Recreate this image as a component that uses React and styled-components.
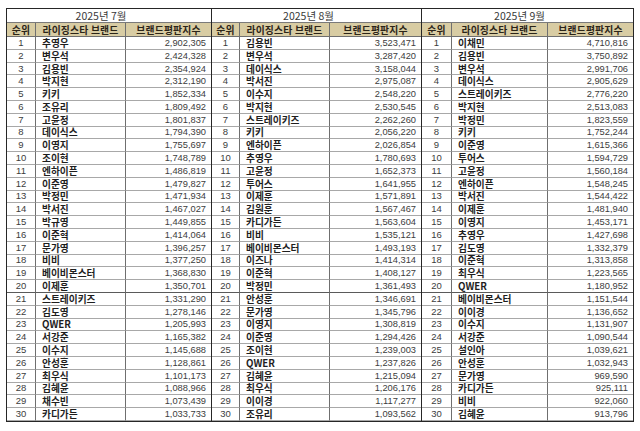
import React from "react";
import styled, { createGlobalStyle } from "styled-components";

const GlobalStyle = createGlobalStyle`
    html, body {
        margin: 0;
        padding: 0;
        background: #ffffff;
    }
    body {
        font-family: "Liberation Sans", "Noto Sans CJK KR", sans-serif;
        -webkit-font-smoothing: antialiased;
    }
`;

const toRows = (text) =>
    text
        .trim()
        .split("\n")
        .map((line) => {
            const [rank, brand, score] = line.trim().split(" ");
            return { rank, brand, score };
        });

const MONTHS = [
    {
        title: "2025년 7월",
        cols: "29px 90px 1fr",
        width: 206,
        rows: toRows(`
            1 추영우 2,902,305
            2 변우석 2,424,328
            3 김용빈 2,354,924
            4 박지현 2,312,190
            5 키키 1,852,334
            6 조유리 1,809,492
            7 고윤정 1,801,837
            8 데이식스 1,794,390
            9 이영지 1,755,697
            10 조이현 1,748,789
            11 엔하이픈 1,486,819
            12 이준영 1,479,827
            13 박정민 1,471,934
            14 박서진 1,467,027
            15 박규영 1,449,855
            16 이준혁 1,414,064
            17 문가영 1,396,257
            18 비비 1,377,250
            19 베이비몬스터 1,368,830
            20 이제훈 1,350,701
            21 스트레이키즈 1,331,290
            22 김도영 1,278,146
            23 QWER 1,205,993
            24 서강준 1,165,382
            25 이수지 1,145,688
            26 안성훈 1,128,861
            27 최우식 1,101,173
            28 김혜윤 1,088,966
            29 채수빈 1,073,439
            30 카디가든 1,033,733
        `),
    },
    {
        title: "2025년 8월",
        cols: "28px 90px 1fr",
        width: 210,
        rows: toRows(`
            1 김용빈 3,523,471
            2 변우석 3,287,420
            3 데이식스 3,158,044
            4 박서진 2,975,087
            5 이수지 2,548,220
            6 박지현 2,530,545
            7 스트레이키즈 2,262,260
            8 키키 2,056,220
            9 엔하이픈 2,026,854
            10 추영우 1,780,693
            11 고윤정 1,652,373
            12 투어스 1,641,955
            13 이제훈 1,571,891
            14 김원훈 1,567,467
            15 카디가든 1,563,604
            16 비비 1,535,121
            17 베이비몬스터 1,493,193
            18 이즈나 1,414,314
            19 이준혁 1,408,127
            20 박정민 1,361,493
            21 안성훈 1,346,691
            22 문가영 1,345,796
            23 이영지 1,308,819
            24 이준영 1,294,426
            25 조이현 1,239,003
            26 QWER 1,237,826
            27 김혜윤 1,215,094
            28 최우식 1,206,176
            29 이이경 1,117,277
            30 조유리 1,093,562
        `),
    },
    {
        title: "2025년 9월",
        cols: "30px 96px 1fr",
        width: 212,
        rows: toRows(`
            1 이채민 4,710,816
            2 김용빈 3,750,892
            3 변우석 2,991,706
            4 데이식스 2,905,629
            5 스트레이키즈 2,776,220
            6 박지현 2,513,083
            7 박정민 1,823,559
            8 키키 1,752,244
            9 이준영 1,615,366
            10 투어스 1,594,729
            11 고윤정 1,560,184
            12 엔하이픈 1,548,245
            13 박서진 1,544,422
            14 이제훈 1,481,940
            15 이영지 1,453,171
            16 추영우 1,427,698
            17 김도영 1,332,379
            18 이준혁 1,313,858
            19 최우식 1,223,565
            20 QWER 1,180,952
            21 베이비몬스터 1,151,544
            22 이이경 1,136,652
            23 이수지 1,131,907
            24 서강준 1,090,544
            25 설인아 1,039,621
            26 안성훈 1,032,943
            27 문가영 969,590
            28 카디가든 925,111
            29 비비 922,060
            30 김혜윤 913,796
        `),
    },
];

const App = () => {
    return (
        <>
            <GlobalStyle />
            <Page>
                <Board>
                    {MONTHS.map((month, i) => (
                        <Table
                            key={month.title}
                            $cols={month.cols}
                            $width={month.width}
                            $first={i === 0}
                        >
                            <TitleCell>{month.title}</TitleCell>
                            <HeadCell $divider>순위</HeadCell>
                            <HeadCell $divider>라이징스타 브랜드</HeadCell>
                            <HeadCell>브랜드평판지수</HeadCell>
                            {month.rows.map((row) => {
                                const strong = row.rank === "20";
                                return (
                                    <React.Fragment key={row.rank}>
                                        <RankCell $strong={strong}>
                                            {row.rank}
                                        </RankCell>
                                        <BrandCell $strong={strong}>
                                            {row.brand}
                                        </BrandCell>
                                        <ScoreCell $strong={strong}>
                                            {row.score}
                                        </ScoreCell>
                                    </React.Fragment>
                                );
                            })}
                        </Table>
                    ))}
                </Board>
            </Page>
        </>
    );
};

const Page = styled.div`
    width: 640px;
    height: 431px;
    padding: 8px 0 0 6px;
    box-sizing: border-box;
    background: #ffffff;
`;

const Board = styled.div`
    display: flex;
    align-items: flex-start;
`;

const Table = styled.div`
    display: grid;
    grid-template-columns: ${(p) => p.$cols};
    grid-template-rows: 14px 14px repeat(30, 12.8px);
    width: ${(p) => p.$width}px;
    box-sizing: border-box;
    border: 1px solid #262626;
    border-left: ${(p) => (p.$first ? "1px solid #262626" : "none")};
`;

const Cell = styled.div`
    display: flex;
    align-items: center;
    box-sizing: border-box;
    min-height: 0;
    white-space: nowrap;
    line-height: 12px;
    border-bottom: 1px solid
        ${(p) => (p.$strong ? "#5a5a5a" : "#a8a8a8")};
`;

const TitleCell = styled(Cell)`
    grid-column: 1 / -1;
    justify-content: center;
    padding-right: 16px;
    font-family: "Noto Sans CJK KR", sans-serif;
    font-size: 10.5px;
    color: #3a3a3a;
    border-bottom: 1px solid #7a7a7a;
`;

const HeadCell = styled(Cell)`
    justify-content: center;
    background: #d8cca3;
    font-family: "Noto Sans CJK KR", sans-serif;
    font-weight: 700;
    font-size: 9.8px;
    letter-spacing: 0.2px;
    color: #2b2418;
    border-bottom: 1px solid #6f6f6f;
    border-right: ${(p) => (p.$divider ? "1px solid #6f6f6f" : "none")};
`;

const RankCell = styled(Cell)`
    justify-content: center;
    font-size: 9.5px;
    color: #3c3c3c;
    border-right: 1px solid #6f6f6f;
`;

const BrandCell = styled(Cell)`
    padding-left: 6px;
    font-family: "Noto Sans CJK KR", sans-serif;
    font-weight: 700;
    font-size: 9.7px;
    color: #1e1e1e;
    border-right: 1px solid #6f6f6f;
`;

const ScoreCell = styled(Cell)`
    justify-content: flex-end;
    padding-right: 5px;
    font-size: 9.3px;
    color: #3c3c3c;
`;

export default App;
